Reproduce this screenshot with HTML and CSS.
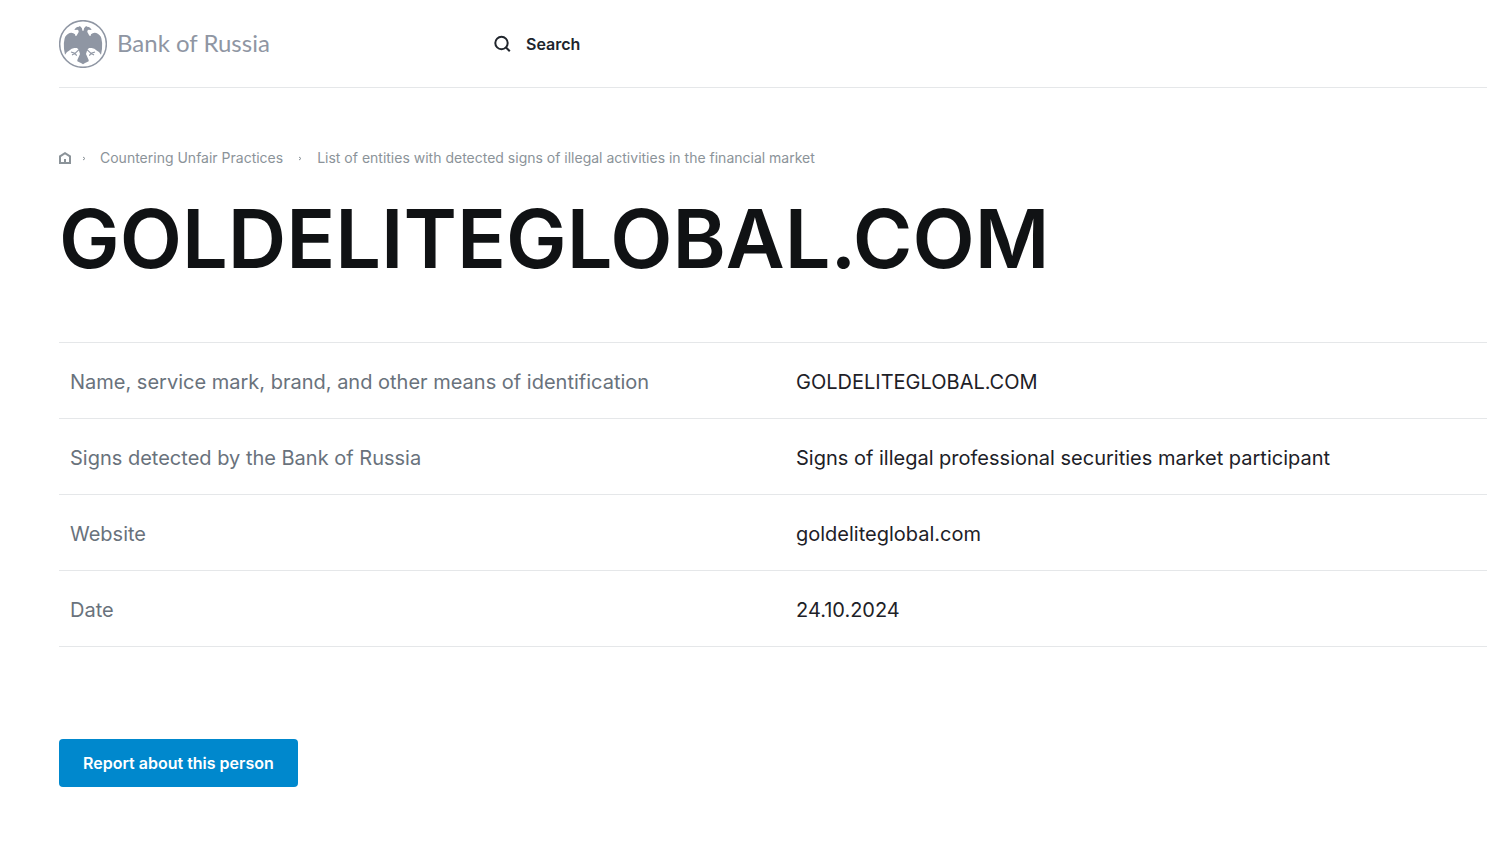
FILE: index.html
```html
<!DOCTYPE html>
<html lang="en">
<head>
<meta charset="utf-8">
<title>GOLDELITEGLOBAL.COM | Bank of Russia</title>
<link rel="stylesheet" href="styles.css">
</head>
<body>
<div class="page">
  <header class="header">
    <a class="logo" href="#">
      <svg class="emblem" viewBox="14 17 144 144" aria-hidden="true">
        <circle cx="86" cy="89" r="70" fill="none" stroke="currentColor" stroke-width="4.5"/>
        <path fill="currentColor" d="M60 47 64 41Q68 37 74 37L76 35 79 37Q84 41 84 48L86 51 88 48Q88 41 93 37L96 35 98 37Q104 37 108 41L112 47 102 46Q98 48 99 53L104 62 107 66Q110 64 110 60 117 53 126 56 138 61 141 72 145 86 143 104L140 121 134 113 128 109 120 103 112 101 104 101 99 106 95 119 103 137 103 141 97 144 92 146 86 150 80 146 75 144 69 141 69 137 77 119 73 106 68 101 60 101 52 103 44 109 38 113 32 121 29 104Q27 86 31 72 34 61 46 56 55 53 62 60 62 64 65 66L68 62 73 53Q74 48 70 46Z"/>
        <path fill="none" stroke="currentColor" stroke-width="3.5" d="M74 106 62 117 50 113M62 117 67 124M62 117 53 122M98 106 110 117 122 113M110 117 105 124M110 117 119 122"/>
      </svg>
      <span>Bank of Russia</span>
    </a>
    <button class="search" type="button">
      <svg width="18" height="18" viewBox="0 0 18 18" fill="none" stroke="currentColor" stroke-width="2" aria-hidden="true"><circle cx="8.5" cy="8" r="6.2"/><path d="m12.8 12.3 4 4"/></svg>
      <span>Search</span>
    </button>
  </header>
  <main>
    <nav class="crumbs" aria-label="Breadcrumb">
      <a class="home" href="#" aria-label="Home"><svg width="12" height="12" viewBox="0 0 12 12" fill="none" stroke="currentColor" stroke-width="2" aria-hidden="true"><path d="M1 11V4.4L6 1.2l5 3.2V11ZM6 11V7"/></svg></a>
      <svg class="sep first" width="3" height="5" viewBox="0 0 3 5" aria-hidden="true"><path d="M0 1 2 2.5 0 4" fill="none" stroke="currentColor"/></svg>
      <a href="#">Countering Unfair Practices</a>
      <svg class="sep" width="3" height="5" viewBox="0 0 3 5" aria-hidden="true"><path d="M0 1 2 2.5 0 4" fill="none" stroke="currentColor"/></svg>
      <a href="#">List of entities with detected signs of illegal activities in the financial market</a>
    </nav>
    <h1>GOLDELITEGLOBAL.COM</h1>
    <table class="details">
      <tbody>
        <tr><th scope="row">Name, service mark, brand, and other means of identification</th><td>GOLDELITEGLOBAL.COM</td></tr>
        <tr><th scope="row">Signs detected by the Bank of Russia</th><td>Signs of illegal professional securities market participant</td></tr>
        <tr><th scope="row">Website</th><td>goldeliteglobal.com</td></tr>
        <tr><th scope="row">Date</th><td>24.10.2024</td></tr>
      </tbody>
    </table>
    <button class="report" type="button">Report about this person</button>
  </main>
</div>
</body>
</html>
```

FILE: styles.css
```css
* { box-sizing: border-box; }
body {
  margin: 0;
  background: #fff;
  color: #1d2127;
  font-family: Inter, "Liberation Sans", sans-serif;
}
a { color: inherit; text-decoration: none; }
button { border: 0; font-family: inherit; cursor: pointer; }
svg { display: block; flex: none; }
.page { padding-left: 59px; }
.header {
  display: flex;
  align-items: center;
  height: 88px;
  border-bottom: 1px solid #e5e7e9;
}
.logo {
  display: flex;
  align-items: center;
  gap: 10px;
  width: 434px;
  color: #8f96a3;
  font: 24px/32px Lato, sans-serif;
}
.logo span { padding-bottom: 2px; }
.emblem { width: 48px; height: 48px; }
.search {
  display: flex;
  align-items: center;
  gap: 15px;
  padding: 0;
  background: none;
  color: #20252c;
  font-size: 16px;
  font-weight: 600;
  line-height: 24px;
}
.crumbs {
  display: flex;
  align-items: center;
  padding-top: 60px;
  color: #8b9399;
  font-size: 14px;
  line-height: 20px;
}
.sep { margin: 0 15px 0 16px; }
.sep.first { margin-left: 12px; margin-right: 14px; }
h1 {
  margin: 23px 0 55px;
  color: #101214;
  font-size: 81px;
  font-weight: 600;
  line-height: 96px;
}
.details {
  width: 100%;
  border-collapse: collapse;
  border-top: 1px solid #e5e7e9;
  font-size: 20px;
  line-height: 27px;
}
.details tr { border-bottom: 1px solid #e5e7e9; }
.details th {
  width: 50%;
  padding: 26px 11px 22px;
  color: #69727c;
  font-weight: 400;
  text-align: left;
}
.details td { padding: 26px 11px 22px 23px; }
.report {
  margin: 92px 0 72px;
  padding: 12px 24px;
  border-radius: 4px;
  background: #0088cd;
  color: #fff;
  font-size: 16px;
  font-weight: 600;
  line-height: 24px;
}
```
